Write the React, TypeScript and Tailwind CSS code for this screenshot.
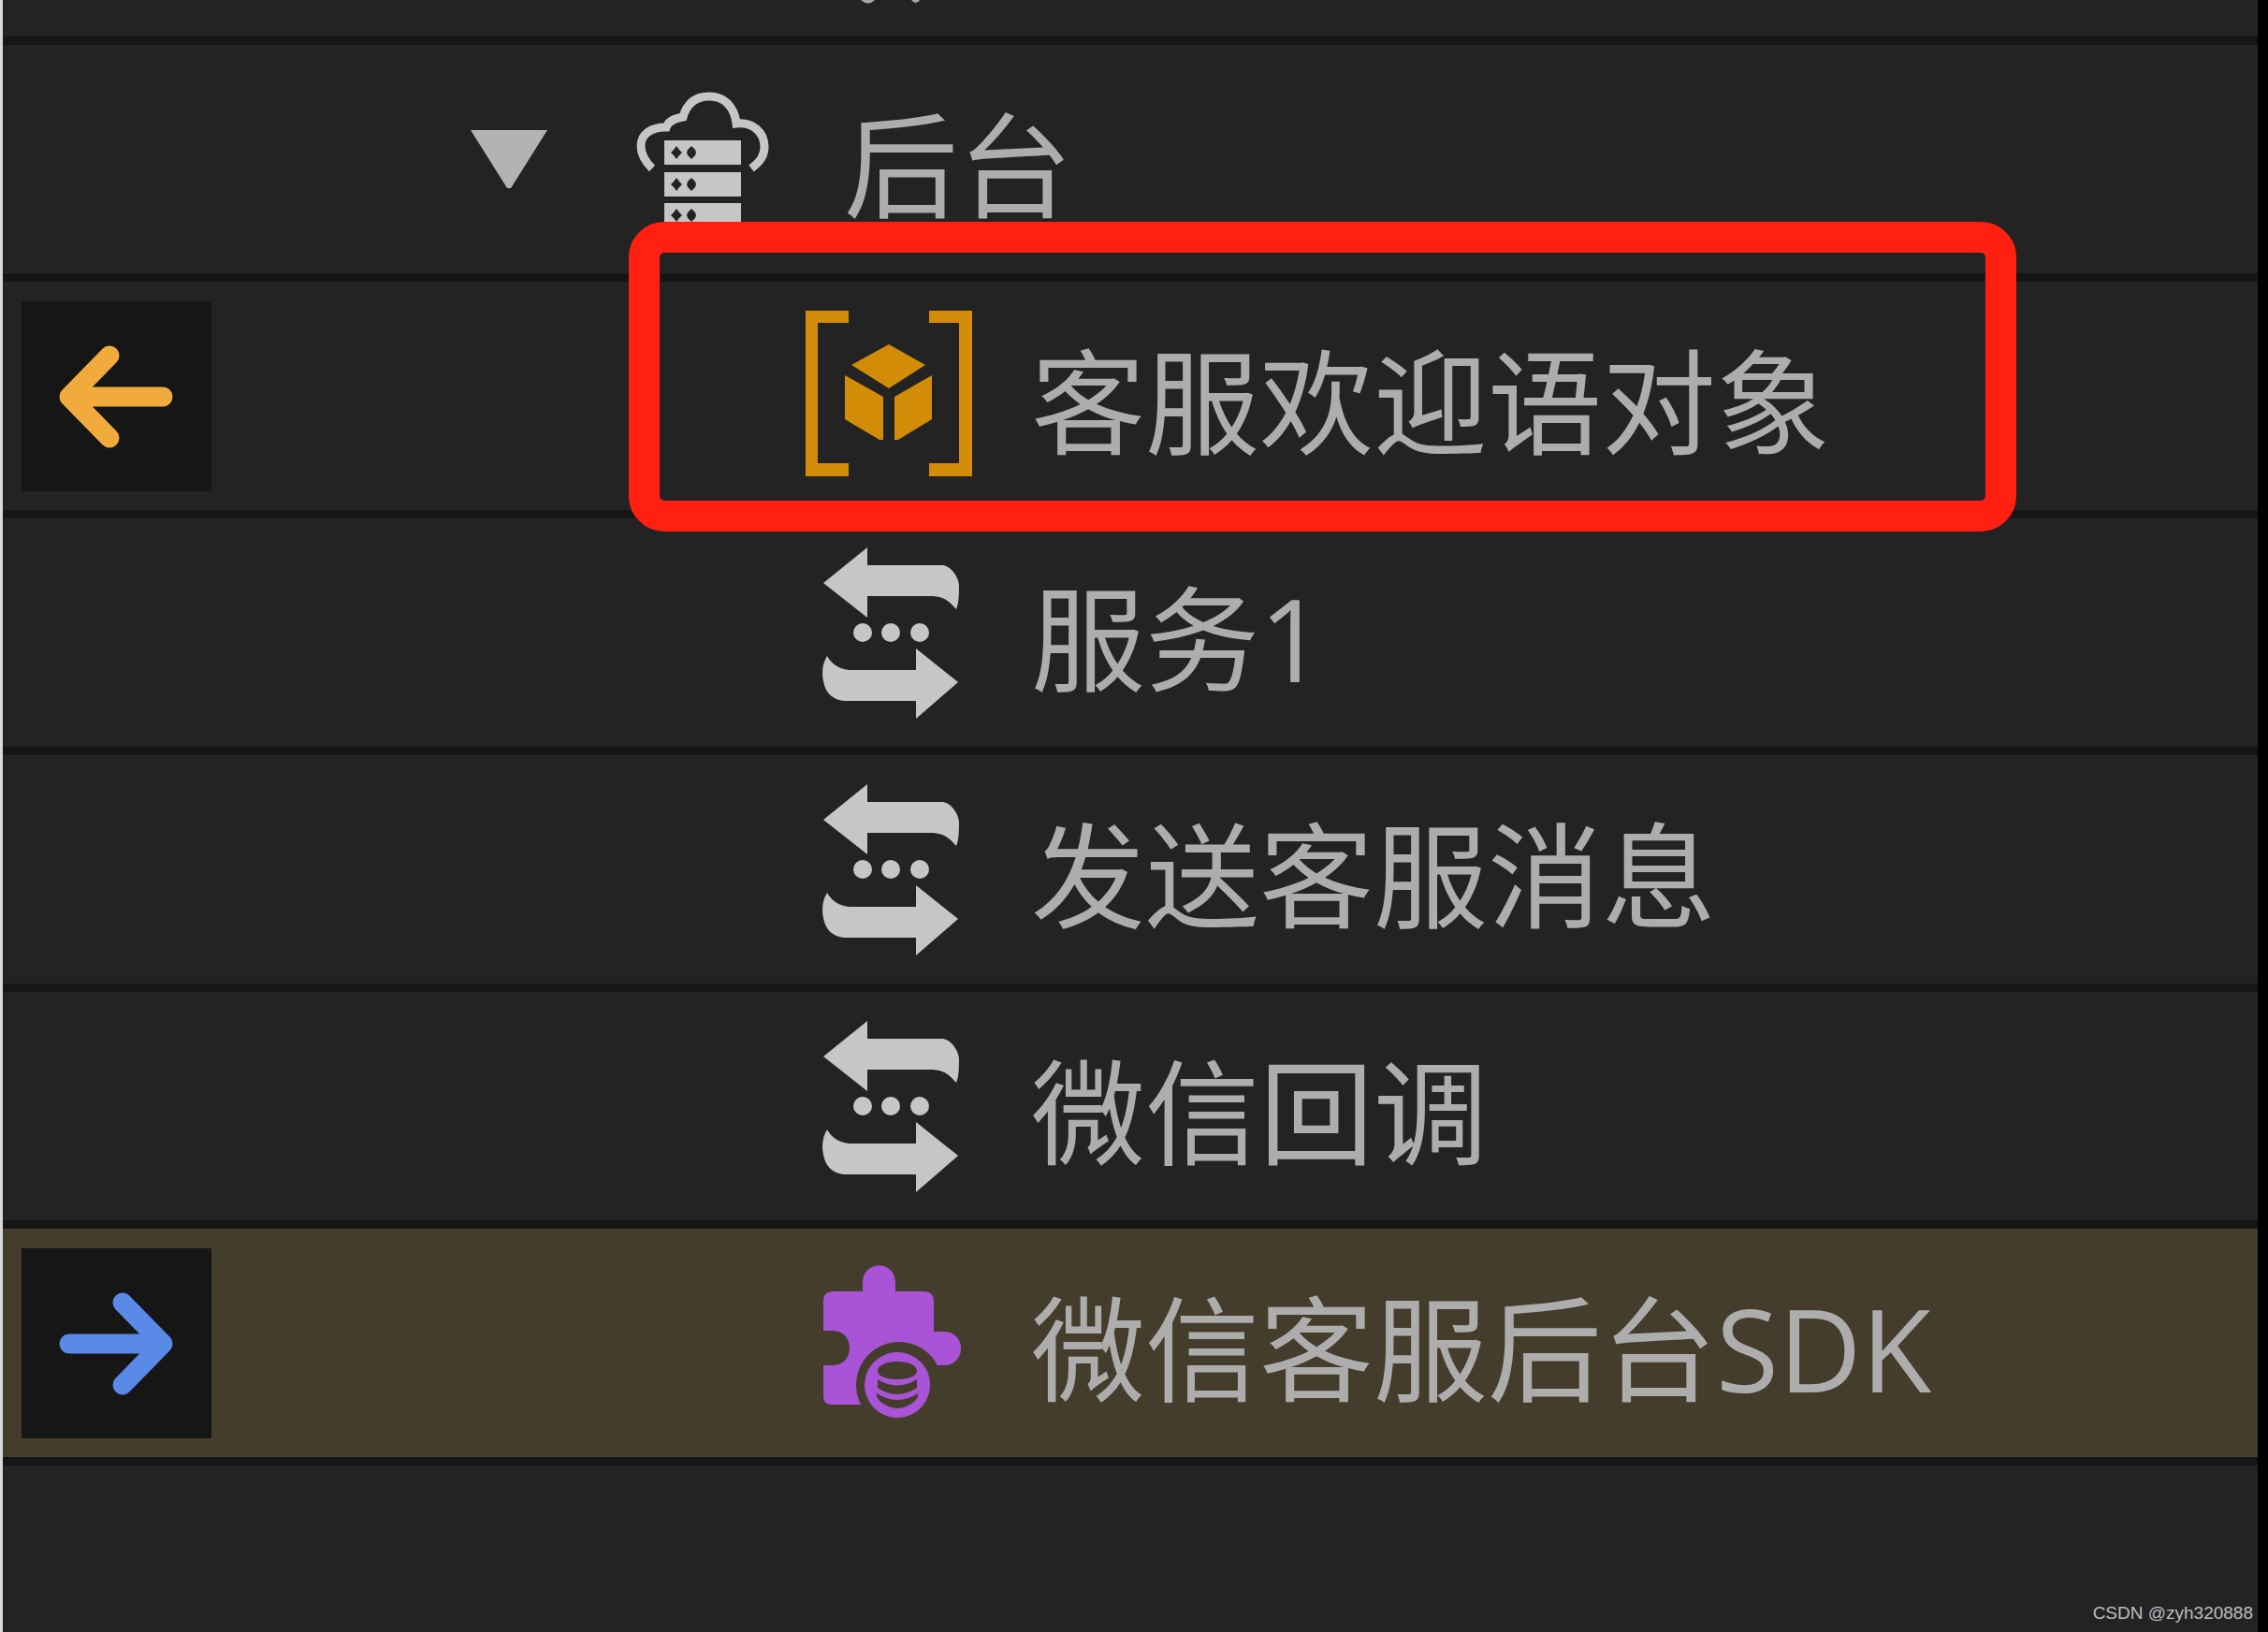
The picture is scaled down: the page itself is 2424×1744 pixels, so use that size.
import { type ReactNode } from "react";

function ServerCloudIcon() {
  return (
    <svg viewBox="0 0 193 193" className="size-[193px]" aria-hidden="true">
      <path
        d="M43 106C35 98 31 91 31 82C31 69 42 62 58 62C60 56 65 53 76 51C80 37 89 29 104 29C120 29 131 40 133 58C150 56 163 67 163 83C163 93 158 99 149 106"
        fill="none"
        stroke="#c6c6c6"
        strokeWidth="9"
      />
      {[76, 110, 143].map((y) => (
        <g key={y}>
          <rect x="56" y={y} width="82" height="26" fill="#c6c6c6" />
          <path
            d={`M69 ${y + 6}l3 4l3 3l-3 3l-3 4l-3-4l-3-3l3-3zM85 ${y + 6}l4 4l1 3l-1 3l-4 4l-4-4l-1-3l1-3z`}
            fill="#232323"
          />
        </g>
      ))}
    </svg>
  );
}

function ObjectIcon() {
  return (
    <svg viewBox="0 0 193 193" className="size-[193px]" fill="#d28c07" aria-hidden="true">
      <path d="M7 5H53V18H20V168H53V182H7zM185 5H139V18H171V168H139V182H185z" />
      <path d="M96 41L135 63L96 88L56 63zM49 74L90 97V143H86L49 121zM142 74L102 97V143H106L142 121z" />
    </svg>
  );
}

function ServiceIcon() {
  return (
    <svg viewBox="0 0 193 193" className="size-[193px]" fill="#c6c6c6" aria-hidden="true">
      <path d="M26 43L73 5V24H154C162 25 170 36 171 45C171 55 171 64 168 71C161 63 156 58 143 57H73V80z" />
      <circle cx="68" cy="96" r="10" />
      <circle cx="98" cy="96" r="10" />
      <circle cx="129" cy="96" r="10" />
      <path d="M170 149L125 113V136H54C43 135 35 130 30 121C25 129 24 139 26 148C28 160 36 168 48 169H125V188z" />
    </svg>
  );
}

function SdkIcon() {
  return (
    <svg viewBox="0 0 193 193" className="size-[193px]" fill="#a953d7" aria-hidden="true">
      <mask id="sdk-cut">
        <rect width="193" height="193" fill="#fff" />
        <circle cx="107" cy="141" r="46" fill="#000" />
      </mask>
      <path
        mask="url(#sdk-cut)"
        d="M37 41H68V32C68 7 103 7 103 32V41H133Q144 41 144 52V84H155C179 84 179 120 155 120H144V162H35Q26 162 26 153V120H36C60 120 60 83 36 83H26V51Q26 41 37 41z"
      />
      <path
        fillRule="evenodd"
        d="M105 106a35 35 0 1 0 .1 0zM105 116C117 116 126 120 126 126C126 132 116 135 105 135C94 135 84 132 84 126C84 120 93 116 105 116zM84 135Q105 148 126 135V144Q105 158 84 144zM83 150Q105 164 127 150Q128 154 123 159Q105 173 87 159Q82 154 83 150z"
      />
    </svg>
  );
}

function ArrowButton({ direction }: { direction: "left" | "right" }) {
  const left = direction === "left";
  return (
    <button
      type="button"
      aria-label={left ? "返回" : "前往"}
      className={`block size-[203px] bg-[#161616] ${left ? "text-[#f1ab3c]" : "text-[#598ae7]"}`}
    >
      <svg viewBox="0 0 203 203" fill="none" stroke="currentColor" strokeWidth="21" strokeLinecap="round" strokeLinejoin="round">
        <path d={left ? "M94 58L51 102L94 146M51 102H151" : "M108 58L151 102L108 146M151 102H51"} />
      </svg>
    </button>
  );
}

type RowProps = {
  icon: ReactNode;
  label: string;
  action?: "left" | "right";
  parent?: boolean;
  selected?: boolean;
  marked?: boolean;
};

function Row({ icon, label, action, parent, selected, marked }: RowProps) {
  return (
    <li
      className={`relative flex h-[253px] shrink-0 items-center border-b-9 border-[#161616] pl-5 ${
        selected ? "bg-[#453d2b]" : "bg-[#232323]"
      }`}
    >
      <div className="w-[203px] shrink-0">{action && <ArrowButton direction={action} />}</div>
      <div className={`flex shrink-0 justify-end ${parent ? "w-[428px] pr-[69px]" : "w-[628px]"}`}>
        {parent && (
          <button type="button" aria-label="折叠" aria-expanded="true">
            <svg viewBox="0 0 82 62" className="h-[62px] w-[82px]">
              <path d="M0 0H82L43 62H39z" fill="#b3b3b3" />
            </svg>
          </button>
        )}
      </div>
      <div className="shrink-0">{icon}</div>
      <span className="pt-3 pl-[55px] text-[122px] leading-none whitespace-nowrap text-[#adadad]">{label}</span>
      {marked && (
        <div className="pointer-events-none absolute -top-16 left-[669px] z-10 h-[331px] w-[1483px] rounded-[38px] border-[33px] border-[#ff2012]" />
      )}
    </li>
  );
}

export default function App() {
  return (
    <main className="relative flex min-h-screen flex-col overflow-hidden border-r-[11px] border-l-3 border-r-black border-l-[#d8dada] bg-[#232323] font-['Open_Sans','Noto_Sans_CJK_SC',sans-serif]">
      <ul className="flex flex-col">
        <li className="h-12 border-b-9 border-[#161616] bg-[#232323] pl-[914px]">
          <svg viewBox="0 0 80 6" className="h-[6px] w-20" fill="#a8a8a8" aria-hidden="true">
            <path d="M3 0H18Q11 7 3 0zM57 0H66Q62 6 57 0z" />
          </svg>
        </li>
        <Row parent icon={<ServerCloudIcon />} label="后台" />
        <Row marked action="left" icon={<ObjectIcon />} label="客服欢迎语对象" />
        <Row icon={<ServiceIcon />} label="服务1" />
        <Row icon={<ServiceIcon />} label="发送客服消息" />
        <Row icon={<ServiceIcon />} label="微信回调" />
        <Row selected action="right" icon={<SdkIcon />} label="微信客服后台SDK" />
      </ul>
      <p className="absolute right-[5px] bottom-2 font-['Liberation_Sans',sans-serif] text-[19px] leading-6 text-[#bdbdbd]">
        CSDN @zyh320888
      </p>
    </main>
  );
}
